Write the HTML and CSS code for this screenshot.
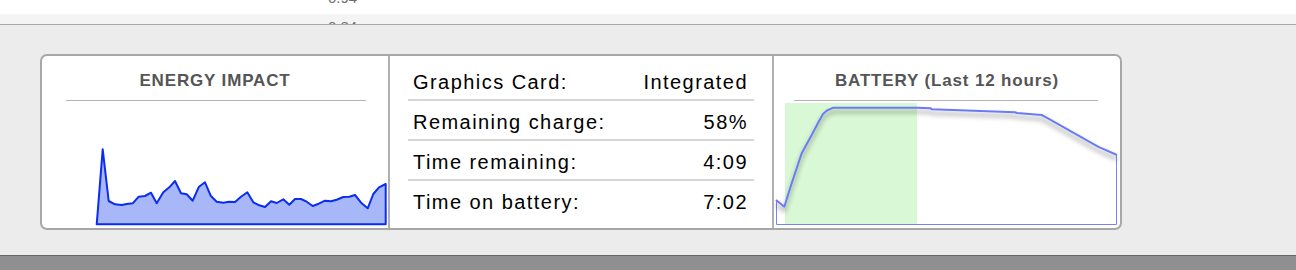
FILE: index.html
```html
<!DOCTYPE html>
<html lang="en">
<head>
  <meta charset="UTF-8" />
  <title>Energy</title>
  <link rel="stylesheet" href="styles.css">
</head>
<body>
  <div class="list">
    <div class="list-row cut"><span class="list-text">0.94</span></div>
    <div class="list-row alt"><span class="list-text">0.84</span></div>
  </div>

  <div class="panel">
    <div class="card">
      <div class="section">
        <div class="section-title">ENERGY IMPACT</div>
        <div class="rule"></div>
        <svg class="chart" viewBox="42 101 346 127" width="346" height="127">
          <polygon fill="#a8b7f7" stroke="#0b2cf2" stroke-width="2" stroke-linejoin="round"
            points="96.7,224.3 102.7,149.3 108.7,201 115,204.3 121.7,205 126.7,204 132.7,203.3 138.7,196.7 145,196 151,192.7 156.7,203.3 163.3,192.3 169.3,187.3 175,181 181,193.3 186.7,194.3 192.7,200.7 199,186.7 205,182.3 210.7,195.7 216.7,201.7 223.3,202.7 229,201.7 235,202 241,196.7 247.3,192.3 253.3,202.3 259.3,205.3 265,207 271,201.3 276.7,203 283.3,199.3 289.3,204.7 295,199 301,199 306.7,201.7 312.7,206 318.7,203.7 325,200.7 331,201.3 336.7,199.7 343.3,197 349.3,196.7 355,195 361.7,203.3 367.7,208.3 373.3,194 379,187.3 385.7,184 385.7,224.3" />
        </svg>
      </div>

      <div class="section info">
        <div class="info-row"><span>Graphics Card:</span><span>Integrated</span></div>
        <div class="info-row"><span>Remaining charge:</span><span>58%</span></div>
        <div class="info-row"><span>Time remaining:</span><span>4:09</span></div>
        <div class="info-row last"><span>Time on battery:</span><span>7:02</span></div>
      </div>

      <div class="section battery">
        <div class="section-title">BATTERY (Last 12 hours)</div>
        <div class="rule"></div>
        <svg class="chart" viewBox="774 101 346 127" width="346" height="127">
          <defs>
            <filter id="lineShadow" x="-5%" y="-30%" width="110%" height="180%">
              <feDropShadow dx="0" dy="4" stdDeviation="2.5" flood-color="#000" flood-opacity="0.45" />
            </filter>
          </defs>
          <rect x="785" y="103" width="132" height="122" fill="#d9f8d5" />
          <polyline fill="none" stroke="#7784f4" stroke-width="1"
            points="776.5,200 776.5,224.5 1116.5,224.5 1116.5,155" />
          <polyline fill="none" stroke="#6b7bf4" stroke-width="2" stroke-linejoin="round" filter="url(#lineShadow)"
            points="776,200 784.3,206.7 791.7,183.3 801.7,153.3 811.7,135 818,123 823,114 827,110.5 833.3,107.7 917,107.7 930.7,108.3 931.7,109.3 1015,112.3 1017,113 1041.7,115 1048,118.3 1098,146.7 1117,155" />
        </svg>
      </div>
    </div>
  </div>

  <div class="statusbar"></div>
</body>
</html>
```

FILE: styles.css
```css
body {
  margin: 0;
  background: #ececec;
  font-family: 'Liberation Sans', Arial, sans-serif;
}
.list {
  height: 24px;
  border-bottom: 1px solid #a9a9a9;
  overflow: hidden;
}
.list-row {
  padding-left: 328px;
  font-size: 15px;
  line-height: 17px;
  color: #6f6f6f;
  overflow: hidden;
}
.list-row.cut {
  height: 14px;
  background: #fff;
}
.list-row.cut .list-text {
  display: block;
  margin-top: -11px;
}
.list-row.alt {
  height: 10px;
  background: #f4f4f4;
}
.list-row.alt .list-text {
  display: block;
  margin-top: 4px;
}
.panel {
  height: 230px;
  box-sizing: border-box;
  padding: 29px 0 0 40px;
}
.card {
  display: flex;
  width: 1078px;
  height: 172px;
  border: 2px solid #a7a7a7;
  border-radius: 7px;
  background: #fff;
}
.section {
  display: flex;
  flex-direction: column;
  width: 346px;
  border-right: 2px solid #b0b0b0;
}
.section.battery {
  border-right: none;
}
.section-title {
  margin-top: 15px;
  text-align: center;
  font-size: 17px;
  line-height: 20px;
  font-weight: bold;
  letter-spacing: 0.85px;
  color: #555;
}
.rule {
  height: 1px;
  margin: 9px 22px 0 24px;
  background: #b2b2b2;
}
.battery .rule {
  margin: 9px 22px 0 20px;
}
.chart {
  display: block;
}
.section.info {
  width: 384px;
  padding: 5px 18px 0;
  box-sizing: border-box;
}
.info-row {
  display: flex;
  justify-content: space-between;
  height: 33px;
  padding: 5px 6px 0 5px;
  border-bottom: 2px solid #d6d6d6;
  font-size: 20px;
  line-height: 33px;
  letter-spacing: 1.45px;
  color: #000;
}
.info-row.last {
  border-bottom: none;
}
.statusbar {
  height: 14px;
  border-top: 1px solid #666;
  background: #8f8f91;
}
```
